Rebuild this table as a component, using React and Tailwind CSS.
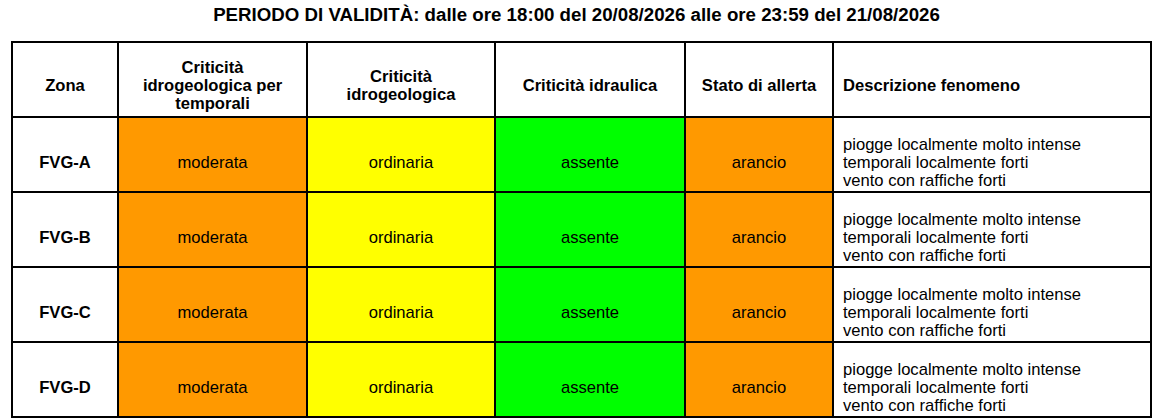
import React from "react";

const zones = ["FVG-A", "FVG-B", "FVG-C", "FVG-D"];

const descrizione = [
  "piogge localmente molto intense",
  "temporali localmente forti",
  "vento con raffiche forti",
];

const App = () => {
  return (
    <div className="w-[1153px] h-[420px] bg-white text-black overflow-hidden font-['Liberation_Sans',Arial,sans-serif]">
      <h1 className="pt-[4px] h-[41px] text-center text-[18.7px] font-bold leading-[22px]">
        PERIODO DI VALIDITÀ: dalle ore 18:00 del 20/08/2026 alle ore 23:59 del 21/08/2026
      </h1>
      <table className="ml-[11px] w-[1141px] table-fixed border-collapse border-2 border-black text-[16.6px]">
        <colgroup>
          <col className="w-[106px]" />
          <col className="w-[189px]" />
          <col className="w-[188px]" />
          <col className="w-[190px]" />
          <col className="w-[148px]" />
          <col />
        </colgroup>
        <thead>
          <tr className="h-[75px] font-bold leading-[18px]">
            <th className="border-2 border-black pt-[13px]">Zona</th>
            <th className="border-2 border-black px-[18px] pt-[13px]">
              Criticità idrogeologica per temporali
            </th>
            <th className="border-2 border-black px-8 pt-[13px]">
              Criticità idrogeologica
            </th>
            <th className="border-2 border-black pt-[13px]">Criticità idraulica</th>
            <th className="border-2 border-black pt-[13px]">Stato di allerta</th>
            <th className="border-2 border-black text-left pl-[9px] pt-[13px]">
              Descrizione fenomeno
            </th>
          </tr>
        </thead>
        <tbody>
          {zones.map((zona) => (
            <tr key={zona} className="h-[75px] text-center">
              <td className="border-2 border-black font-bold pt-[17px]">{zona}</td>
              <td className="border-2 border-black bg-[#ff9900] pt-[17px]">moderata</td>
              <td className="border-2 border-black bg-[#ffff00] pt-[17px]">ordinaria</td>
              <td className="border-2 border-black bg-[#00ff00] pt-[17px]">assente</td>
              <td className="border-2 border-black bg-[#ff9900] pt-[17px]">arancio</td>
              <td className="border-2 border-black text-left pl-[9px] pt-[17px] leading-[18px]">
                {descrizione.map((riga) => (
                  <div key={riga}>{riga}</div>
                ))}
              </td>
            </tr>
          ))}
        </tbody>
      </table>
    </div>
  );
};

export default App;
